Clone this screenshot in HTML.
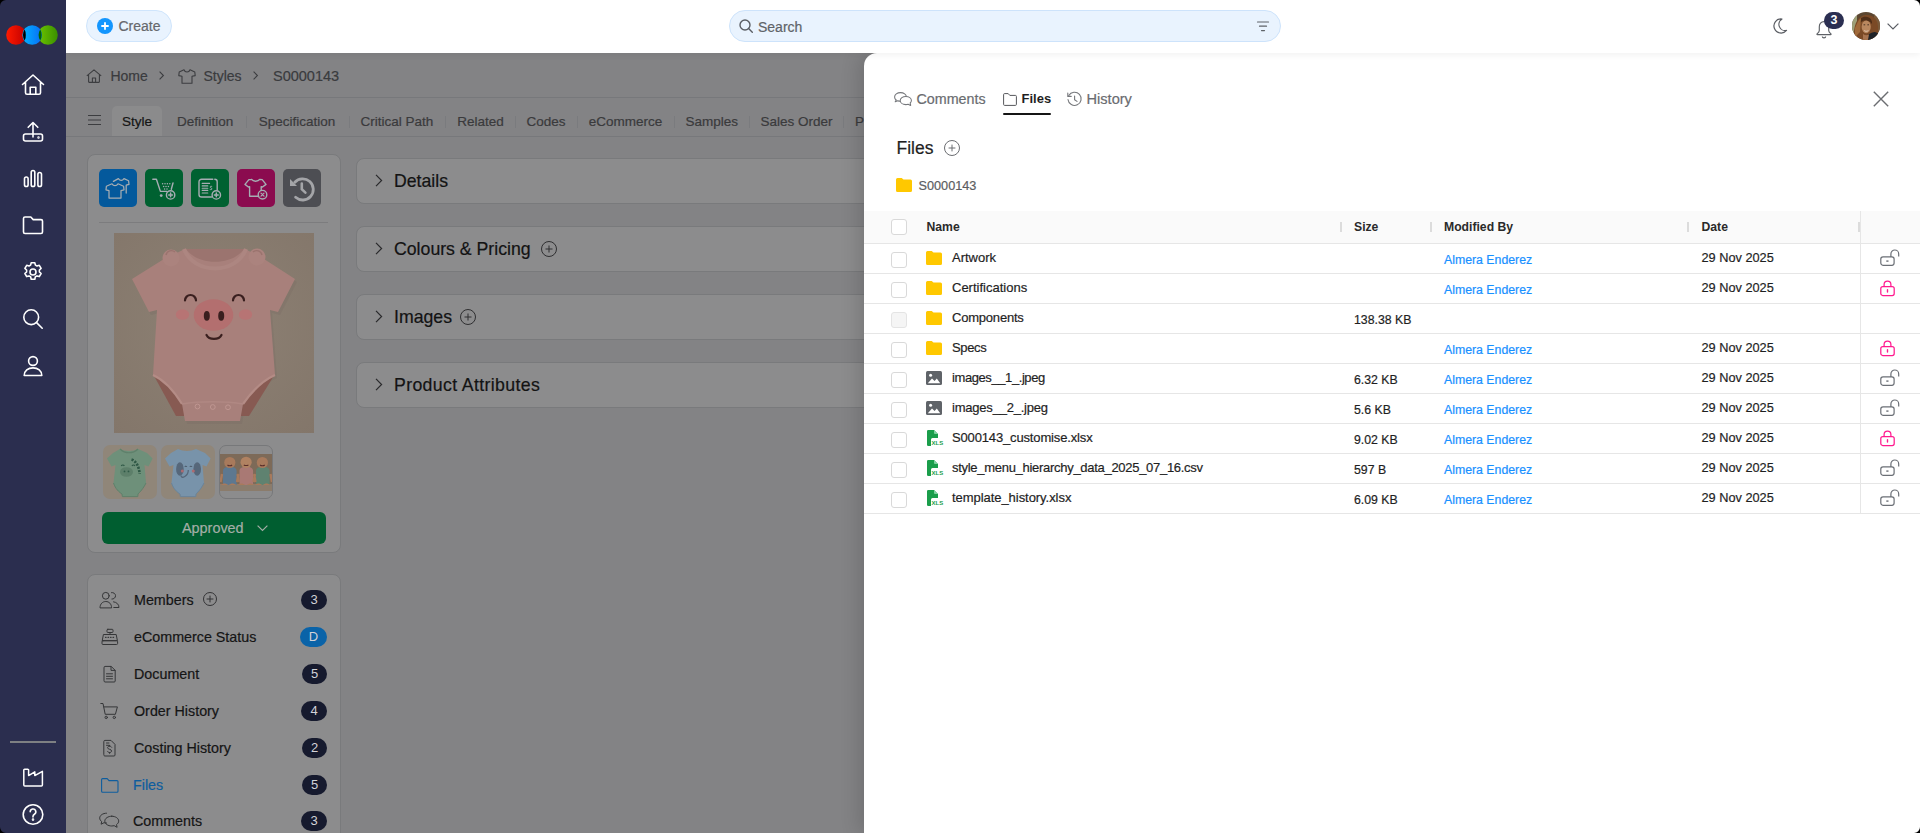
<!DOCTYPE html>
<html><head><meta charset="utf-8">
<style>
*{box-sizing:border-box;margin:0;padding:0}
html,body{width:1920px;height:833px;overflow:hidden;background:#838385;font-family:"Liberation Sans",sans-serif}
.a{position:absolute}
.t{position:absolute;white-space:nowrap;line-height:1;-webkit-text-stroke:.2px currentColor}
svg{position:absolute;overflow:visible}
#side{left:0;top:0;width:66px;height:833px;background:#2b2e4f}
#hdr{left:66px;top:0;width:1854px;height:53px;background:#fff;box-shadow:0 2px 7px rgba(0,0,0,.06)}
.card{position:absolute;background:#8c8c8d;border-radius:8px;border:1px solid #797a7c}
.tab{position:absolute;-webkit-text-stroke:.2px currentColor;top:113.5px;font-size:13.5px;color:#3a3a3c}
.tsep{position:absolute;top:116px;width:1px;height:12px;background:#7a7b7e}
.acc{position:absolute;left:356px;width:1544px;height:46px;background:#8c8c8d;border-radius:8px;border:1px solid #797a7c}
.acc .t{left:37px;top:14px;font-size:17.7px;color:#131313}
.li{position:absolute;left:87px;width:254px;height:37px}
.li .t{left:47px;top:11.8px;font-size:14.3px;color:#151515}
.bdg{position:absolute;left:214px;top:9px;width:26px;height:20px;border-radius:10px;background:#161a2e;color:#d2d2d8;font-size:13px;text-align:center;line-height:20px}
#drawer{left:864px;top:53px;width:1056px;height:780px;background:#fff;border-top-left-radius:13px;box-shadow:-4px 0 20px rgba(0,0,0,.16)}
.cb{position:absolute;left:891px;width:16px;height:16px;border:1px solid #d9d9d9;border-radius:3px;background:#fff}
.cb.dis{background:#f5f5f5;border-color:#e4e4e4}
.th{position:absolute;top:221px;font-size:12.2px;font-weight:bold;color:#2a2a2a;white-space:nowrap;line-height:1}
.td{position:absolute;font-size:13px;color:#1f1f1f;white-space:nowrap;line-height:1;-webkit-text-stroke:.2px currentColor}
.td.sz{font-size:12.3px}
.td.au{font-size:12.3px;color:#1890ff}
.td.dt{font-size:12.75px}
</style></head>
<body>
<!-- content area (under mask) -->
<div class="a" id="content" style="left:66px;top:53px;width:1854px;height:780px;background:#838385"></div>
<!-- breadcrumb -->
<svg style="left:86px;top:69px" width="16" height="14" viewBox="0 0 16 14" fill="none" stroke="#3c3d40" stroke-width="1.1" stroke-linejoin="round"><path d="M0.8 6.8L8 0.8L15.2 6.8M2.6 5.4v7.4a.6.6 0 0 0 .6.6h9.6a.6.6 0 0 0 .6-.6V5.4M6.4 13.4V9h3.2v4.4"/></svg>
<div class="t" style="left:110.4px;top:68.5px;font-size:14px;color:#3a3b3e">Home</div>
<svg style="left:158.5px;top:71px" width="5" height="9" viewBox="0 0 5 9"><path d="M.6.6L4.4 4.5L.6 8.4" fill="none" stroke="#3c3d40" stroke-width="1.1"/></svg>
<svg style="left:178px;top:69px" width="18" height="15" viewBox="0 0 18 15" fill="none" stroke="#3c3d40" stroke-width="1.1" stroke-linejoin="round"><path d="M6 .8C6.5 2.2 7.6 3 9 3s2.5-.8 3-2.2L16.8 3 17.2 6.6 14 7.2V14.2H4V7.2L.8 6.6 1.2 3Z"/></svg>
<div class="t" style="left:203.5px;top:68.5px;font-size:14px;color:#3a3b3e">Styles</div>
<svg style="left:253px;top:71px" width="5" height="9" viewBox="0 0 5 9"><path d="M.6.6L4.4 4.5L.6 8.4" fill="none" stroke="#3c3d40" stroke-width="1.1"/></svg>
<div class="t" style="left:273px;top:68.5px;font-size:14.5px;color:#3a3b3e">S0000143</div>
<div class="a" style="left:66px;top:97px;width:1854px;height:1px;background:#77787b"></div>
<!-- tabs -->
<svg style="left:88px;top:115px" width="13" height="10" viewBox="0 0 13 10"><path d="M0 .5h13M0 5h13M0 9.5h13" stroke="#3c3d40" stroke-width="1"/></svg>
<div class="a" style="left:112px;top:106px;width:50px;height:31px;background:#8b8b8c;border-radius:5px 5px 0 0"></div>
<div class="tab" style="left:122px;color:#151515">Style</div>
<div class="tab" style="left:177px">Definition</div><div class="tsep" style="left:246px"></div>
<div class="tab" style="left:258.7px">Specification</div><div class="tsep" style="left:348.5px"></div>
<div class="tab" style="left:360.5px">Critical Path</div><div class="tsep" style="left:445px"></div>
<div class="tab" style="left:457.2px">Related</div><div class="tsep" style="left:514.5px"></div>
<div class="tab" style="left:526.5px">Codes</div><div class="tsep" style="left:577px"></div>
<div class="tab" style="left:588.7px">eCommerce</div><div class="tsep" style="left:673.5px"></div>
<div class="tab" style="left:685.5px">Samples</div><div class="tsep" style="left:748.5px"></div>
<div class="tab" style="left:760.5px">Sales Order</div><div class="tsep" style="left:843px"></div>
<div class="tab" style="left:855px">Pricing</div>
<div class="a" style="left:66px;top:136px;width:1854px;height:1px;background:#77787b"></div>
<!-- accordion cards -->
<div class="acc" style="top:158px"><svg style="left:18px;top:15px" width="8" height="13" viewBox="0 0 8 13"><path d="M1 .8L6.6 6.5L1 12.2" fill="none" stroke="#2a2a2c" stroke-width="1.2"/></svg><div class="t">Details</div></div>
<div class="acc" style="top:226px"><svg style="left:18px;top:15px" width="8" height="13" viewBox="0 0 8 13"><path d="M1 .8L6.6 6.5L1 12.2" fill="none" stroke="#2a2a2c" stroke-width="1.2"/></svg><div class="t">Colours &amp; Pricing</div><svg style="left:184px;top:14px" width="16" height="16" viewBox="0 0 16 16" fill="none" stroke="#2f2f31" stroke-width="1"><circle cx="8" cy="8" r="7.5"/><path d="M8 4.5v7M4.5 8h7"/></svg></div>
<div class="acc" style="top:294px"><svg style="left:18px;top:15px" width="8" height="13" viewBox="0 0 8 13"><path d="M1 .8L6.6 6.5L1 12.2" fill="none" stroke="#2a2a2c" stroke-width="1.2"/></svg><div class="t">Images</div><svg style="left:103px;top:14px" width="16" height="16" viewBox="0 0 16 16" fill="none" stroke="#2f2f31" stroke-width="1"><circle cx="8" cy="8" r="7.5"/><path d="M8 4.5v7M4.5 8h7"/></svg></div>
<div class="acc" style="top:362px"><svg style="left:18px;top:15px" width="8" height="13" viewBox="0 0 8 13"><path d="M1 .8L6.6 6.5L1 12.2" fill="none" stroke="#2a2a2c" stroke-width="1.2"/></svg><div class="t" style="letter-spacing:.36px">Product Attributes</div></div>
<!-- left card 1 -->
<div class="card" style="left:87px;top:154px;width:254px;height:399px"></div>
<div class="a" style="left:99px;top:169px;width:38px;height:38px;border-radius:5px;background:#04599c"></div>
<div class="a" style="left:145px;top:169px;width:38px;height:38px;border-radius:5px;background:#006131"></div>
<div class="a" style="left:191px;top:169px;width:38px;height:38px;border-radius:5px;background:#006131"></div>
<div class="a" style="left:237px;top:169px;width:38px;height:38px;border-radius:5px;background:#8b0b4f"></div>
<div class="a" style="left:283px;top:169px;width:38px;height:38px;border-radius:5px;background:#4d4e53"></div>
<svg style="left:99px;top:169px" width="38" height="38" viewBox="0 0 38 38" fill="none" stroke="#a6adb3" stroke-width="1.25" stroke-linejoin="round" stroke-linecap="round">
<path d="M14.4 12.4L19.4 9.6C20.2 10.8 21.2 11.4 22.2 11.4S24.2 10.8 25 9.6L29.6 11.8L30 15.4L27.2 16.2V24"/>
<path d="M13 14.8C13.8 16 15 16.6 16 16.6S18.2 16 19 14.8L24.6 17.2L25 20.8L22 21.6V29H10V21.6L7 20.8L7.4 17.2Z"/>
</svg>
<svg style="left:145px;top:169px" width="38" height="38" viewBox="0 0 38 38" fill="none" stroke="#a6adb3" stroke-width="1.4" stroke-linejoin="round" stroke-linecap="round">
<path d="M7.8 10.2H11.4L15.4 22.4H22"/><path d="M28 14L26.3 20.3"/>
<g fill="#a6adb3" stroke="none"><circle cx="17.6" cy="14.7" r=".75"/><circle cx="20" cy="14.7" r=".75"/><circle cx="22.4" cy="14.7" r=".75"/><circle cx="24.8" cy="14.7" r=".75"/><circle cx="18.6" cy="17.4" r=".75"/><circle cx="21" cy="17.4" r=".75"/><circle cx="23.4" cy="17.4" r=".75"/><circle cx="19.6" cy="20" r=".75"/><circle cx="22" cy="20" r=".75"/><circle cx="16.2" cy="26.6" r="1.4"/></g>
<circle cx="25.6" cy="25.9" r="4.2"/><path d="M25.6 24v3.8M23.7 25.9h3.8" stroke-width="1.5"/>
</svg>
<svg style="left:191px;top:169px" width="38" height="38" viewBox="0 0 38 38" fill="none" stroke="#a6adb3" stroke-width="1.4" stroke-linejoin="round" stroke-linecap="round">
<path d="M21.8 10.3H10.6A2.6 2.6 0 0 0 8 12.9V25.4A2.6 2.6 0 0 0 10.6 28H20.5"/><path d="M23.8 10.3A2.4 2.4 0 0 1 26.2 12.7V21"/>
<path d="M11.2 14.4h7.4M11.2 16.9h5.6M11.2 19.2h5.6M11.2 21.4h5.6M11.2 24h5.6" stroke-width="1.1"/>
<path d="M20.8 17.4c-.9-.5-1.8 0-1.6.8s1.8.8 1.7 1.7-1 1-1.8.6" stroke-width="1"/>
<circle cx="25.3" cy="25.9" r="4.2"/><path d="M25.3 24v3.8M23.4 25.9h3.8" stroke-width="1.5"/>
</svg>
<svg style="left:237px;top:169px" width="38" height="38" viewBox="0 0 38 38" fill="none" stroke="#a6adb3" stroke-width="1.4" stroke-linejoin="round" stroke-linecap="round">
<path d="M14.6 10.4C15.4 11.6 16.6 12.2 18.6 12.2S21.9 11.6 22.7 10.4L25.2 10.6L29 15.4L25.5 18L24.2 17.6V21.4M21.7 27.2H12.6V17.6L11.4 18L8 15.4L11.9 10.6L14.6 10.4"/>
<circle cx="25.5" cy="25.7" r="4.3"/><path d="M24 24.2l3 3M27 24.2l-3 3" stroke-width="1.2"/>
</svg>
<svg style="left:283px;top:169px" width="38" height="38" viewBox="0 0 38 38" fill="none" stroke="#a4a5a8" stroke-width="2.8" stroke-linecap="round">
<path d="M11.8 13.3A10.6 10.6 0 1 1 12.6 28.3"/>
<path d="M7 10.1V16.9H14Z" fill="#a4a5a8" stroke="none"/>
<path d="M18.8 14.6V20.3L22.4 23.6" stroke-width="2.6"/>
</svg>
<div class="a" style="left:99px;top:222px;width:229px;height:1px;background:#7c7c7e"></div>
<svg style="left:114px;top:233px" width="200" height="200" viewBox="0 0 200 200">
<defs><radialGradient id="obg" cx="0.5" cy="0.45" r="0.75"><stop offset="0" stop-color="#8d8174"/><stop offset="1" stop-color="#83766a"/></radialGradient></defs>
<rect width="200" height="200" fill="url(#obg)"/>
<path d="M71 16C85 20 117 20 131 16L150 26L181 46L164 79L156 77L161 142C150 147 138 158 129 171L126 188H71L68 171C60 158 50 147 39 142L43 77L35 79L18 46L50 26Z" fill="#7a6c64" opacity=".35" transform="translate(2 3)"/>
<path d="M39 141L62 183H135L161 141Z" fill="#875a52"/>
<path d="M71 16C85 20 117 20 131 16L150 26L181 46L164 79L156 77L161 142C150 147 138 158 129 171L126 188H71L68 171C60 158 50 147 39 142L43 77L35 79L18 46L50 26Z" fill="#a8807b"/>
<path d="M39 142C50 147 60 158 68 171M161 142C150 147 138 158 129 171" fill="none" stroke="#b48c86" stroke-width="2.2"/>
<path d="M72 16C84 33 118 33 130 16Z" fill="#9b746f"/>
<path d="M70 16C80 42 122 42 132 16" fill="none" stroke="#ad8681" stroke-width="4"/>
<circle cx="57" cy="25" r="8.5" fill="#ab837e"/><circle cx="143" cy="24" r="8.5" fill="#ab837e"/>
<path d="M52 22a5.5 5.5 0 0 1 9-3" fill="none" stroke="#9a736e" stroke-width="1.4"/><path d="M139 19a5.5 5.5 0 0 1 9 3" fill="none" stroke="#9a736e" stroke-width="1.4"/>
<path d="M68 171C85 168 112 168 129 171" fill="none" stroke="#b08883" stroke-width="1.5"/>
<circle cx="83.5" cy="173.5" r="2.4" fill="none" stroke="#bf9691" stroke-width="1"/><circle cx="98.8" cy="174" r="2.4" fill="none" stroke="#bf9691" stroke-width="1"/><circle cx="114" cy="174.3" r="2.4" fill="none" stroke="#bf9691" stroke-width="1"/>
<ellipse cx="99.5" cy="82" rx="19.8" ry="15.8" fill="#b36f6f"/>
<ellipse cx="68.5" cy="81.5" rx="6.7" ry="5.3" fill="#b77474"/><ellipse cx="131.5" cy="81.5" rx="6.7" ry="5.3" fill="#b77474"/>
<ellipse cx="92.8" cy="82.9" rx="3" ry="4.8" fill="#3a1f1f"/><ellipse cx="107.2" cy="82.9" rx="3" ry="4.8" fill="#3a1f1f"/>
<path d="M71 67.5a5.5 5.5 0 0 1 11 0M119 67.5a5.5 5.5 0 0 1 11 0M92.5 102a8 6 0 0 0 15 0" fill="none" stroke="#3a1f1f" stroke-width="2.2" stroke-linecap="round"/>
</svg>
<div class="a" style="left:102.5px;top:445px;width:54px;height:54px;border-radius:7px;background:#908679;overflow:hidden"><svg style="left:0;top:0" width="54" height="54" viewBox="0 0 54 54"><path d="M17 4C22 6.5 30 6.5 35 4L44 8L49.6 13.5L45.5 21.5L41.5 20L43 38C40 44 37 47 35 49L34.8 51.6H19.4L19 49C16 47 12.5 44 10.5 38L12.5 20L8.5 21.5L4 13.5L10 8Z" fill="#6e907a"/><path d="M10.5 38C12.5 44 16 47 19 49L19.4 51.6H34.8L35 49C37 47 40 44 43 38" fill="none" stroke="#5f806b" stroke-width="1"/><path d="M17 4C22 9 30 9 35 4" fill="none" stroke="#5f806b" stroke-width="1.2"/>
<path d="M28.5 14.5C33 16 36 21 36.6 29" fill="none" stroke="#2f5846" stroke-width="2.6" stroke-dasharray="2.2 1.2"/>
<ellipse cx="23.5" cy="27" rx="6.5" ry="4.8" fill="#5d7f6a"/><circle cx="21.5" cy="26.4" r=".9" fill="#2f5846"/><circle cx="25.5" cy="26.4" r=".9" fill="#2f5846"/>
<path d="M18.3 21a1.6 1.6 0 0 1 3 0M29 21a1.6 1.6 0 0 1 3 0" fill="none" stroke="#2f5846" stroke-width="1.1"/></svg></div>
<div class="a" style="left:160.5px;top:445px;width:54px;height:54px;border-radius:7px;background:#908679;overflow:hidden"><svg style="left:0;top:0" width="54" height="54" viewBox="0 0 54 54"><path d="M17 4C22 6.5 30 6.5 35 4L44 8L49.6 13.5L45.5 21.5L41.5 20L43 38C40 44 37 47 35 49L34.8 51.6H19.4L19 49C16 47 12.5 44 10.5 38L12.5 20L8.5 21.5L4 13.5L10 8Z" fill="#7893aa"/><path d="M10.5 38C12.5 44 16 47 19 49L19.4 51.6H34.8L35 49C37 47 40 44 43 38" fill="none" stroke="#6a849a" stroke-width="1"/>
<ellipse cx="18.9" cy="24" rx="3.8" ry="6.8" fill="#56677a"/><ellipse cx="36.2" cy="24" rx="3.8" ry="6.8" fill="#56677a"/>
<circle cx="21.3" cy="26" r="1.5" fill="#ad6a70"/><circle cx="32.3" cy="26" r="1.5" fill="#ad6a70"/>
<path d="M23.5 22a1.5 1.5 0 0 1 2.6 0M28.6 22a1.5 1.5 0 0 1 2.6 0" fill="none" stroke="#3f4c5a" stroke-width=".9"/>
<path d="M27.3 25c0 3-1 5-3.5 6.5s-4 .5-3.5-1" fill="none" stroke="#56677a" stroke-width="1.3"/></svg></div>
<div class="a" style="left:218.5px;top:445px;width:54px;height:54px;border-radius:7px;background:#8c8c8d;border:1px solid #77787a;overflow:hidden"><svg style="left:0;top:8px" width="52" height="37" viewBox="0 0 52 37"><rect width="52" height="37" fill="#7d6a58"/><rect y="30" width="52" height="7" fill="#8b7c6c"/>
<path d="M3 17c0-3 3-4.5 6.8-4.5s6.8 1.5 6.8 4.5V31H3Z" fill="#5d7890"/><path d="M19.5 17c0-3 3-4.5 6.8-4.5s6.8 1.5 6.8 4.5V31h-13.6Z" fill="#a97974"/><path d="M36 17c0-3 3-4.5 6.8-4.5S49.6 14 49.6 17V31H36Z" fill="#5f8270"/>
<circle cx="9.8" cy="8.5" r="5.6" fill="#a87a5c"/><circle cx="26.1" cy="8.3" r="5.6" fill="#b08262"/><circle cx="42.4" cy="8.5" r="5.6" fill="#a87a5c"/>
<path d="M7.5 11c1 1 3.6 1 4.6 0M23.8 10.8c1 1 3.6 1 4.6 0M40.1 11c1 1 3.6 1 4.6 0" fill="none" stroke="#5a2e2a" stroke-width="1.1"/>
<path d="M1 31c2-2 5-2 7 0M9 31c2-2 5-2 7 0M18 31c2-2 5-2 7 0M27 31c2-2 5-2 7 0M35 31c2-2 5-2 7 0M43 31c2-2 5-2 7 0" fill="#a87a5c"/>
<path d="M2 20l-1.5 8M17.5 20l1.5 8M18.5 20l-1.5 8M34 20l1.5 8M35 20l-1.5 8M50.5 20l1.5 8" stroke="#a87a5c" stroke-width="2.4"/></svg></div>
<div class="a" style="left:102px;top:512px;width:224px;height:32px;border-radius:6px;background:#005e30"></div>
<div class="t" style="left:182px;top:521px;font-size:14.4px;color:#a4aea7">Approved</div>
<svg style="left:257px;top:525px" width="11" height="6" viewBox="0 0 11 6"><path d="M.6.6L5.5 5.4L10.4.6" fill="none" stroke="#a4aea7" stroke-width="1.2"/></svg>
<!-- left card 2 -->
<div class="card" style="left:87px;top:574px;width:254px;height:270px"></div>
<div class="li" style="top:581px"><div class="t">Members</div><svg style="left:116px;top:11px" width="14" height="14" viewBox="0 0 14 14" fill="none" stroke="#333335" stroke-width="1"><circle cx="7" cy="7" r="6.5"/><path d="M7 3.6v6.8M3.6 7h6.8"/></svg><div class="bdg">3</div></div>
<div class="li" style="top:618px"><div class="t">eCommerce Status</div><div class="bdg" style="left:213px;width:27px;background:#0a63a8">D</div></div>
<div class="li" style="top:655px"><div class="t">Document</div><div class="bdg" style="left:215px;width:25px">5</div></div>
<div class="li" style="top:692px"><div class="t">Order History</div><div class="bdg">4</div></div>
<div class="li" style="top:729px"><div class="t">Costing History</div><div class="bdg" style="left:215px;width:25px">2</div></div>
<div class="li" style="top:766px"><div class="t" style="left:46px;color:#0e5d9e">Files</div><div class="bdg" style="left:215px;width:25px">5</div></div>
<div class="li" style="top:802px"><div class="t" style="left:46px">Comments</div><div class="bdg">3</div></div>
<svg style="left:0;top:0" width="400" height="833" viewBox="0 0 400 833" fill="none" stroke="#353638" stroke-width="1" stroke-linejoin="round" stroke-linecap="round">
<!-- members -->
<circle cx="105.8" cy="595.8" r="3.4"/><path d="M100 607.5c0-3.6 2.6-6 5.8-6s5.8 2.4 5.8 6Z"/>
<path d="M111.5 592.6a3.3 3.3 0 1 1 .4 6.5"/><path d="M113.5 601.8c3.2.4 5.5 2.6 5.5 5.7h-5.2"/>
<!-- register -->
<rect x="107" y="629.3" width="6" height="3.2" rx=".8"/><path d="M110 632.5v2"/>
<path d="M103.8 634.5h12.4l1.2 6.2H102.6Z"/><rect x="102" y="640.7" width="15.6" height="3.8" rx="1"/>
<path d="M105.5 637.3h.6M108 637.3h.6M110.5 637.3h.6M113 637.3h.6" stroke-width="1.2"/>
<!-- document -->
<path d="M104 667.4a1 1 0 0 1 1-1h6.2l4 4v10.6a1 1 0 0 1-1 1h-9.2a1 1 0 0 1-1-1Z"/><path d="M111 666.6v3.8h4"/><path d="M106.5 673.8h6M106.5 676.3h6M106.5 678.8h6"/>
<!-- cart -->
<path d="M100.8 703.5h2.2l2.2 10.8h10.2l2-7.4H104"/><circle cx="106.2" cy="717.4" r="1.2"/><circle cx="114.3" cy="717.4" r="1.2"/>
<!-- costing -->
<path d="M103.8 741.4a1 1 0 0 1 1-1h6.2l4 4v10.6a1 1 0 0 1-1 1h-9.2a1 1 0 0 1-1-1Z"/><path d="M106.5 743h2.5M106.5 745.3h2.5"/><path d="M111.6 747.2c-.5-.7-1.2-1-2-1-1.2 0-2 .6-2 1.5 0 2 4 1.2 4 3.3 0 .9-.8 1.5-2 1.5-.9 0-1.6-.4-2.1-1.1M109.6 745.3v.9M109.6 752.5v.9"/>
<!-- files folder -->
<path d="M101.6 779.6a1 1 0 0 1 1-1h4.6l1.8 2h8a1 1 0 0 1 1 1v9.6a1 1 0 0 1-1 1h-14.4a1 1 0 0 1-1-1Z" stroke="#0e5d9e" stroke-width="1.1"/>
<!-- comments -->
<path d="M106.5 813.2c-3.8 0-6.8 2.2-6.8 4.9 0 1.4.8 2.6 2 3.5l-.6 2.6 2.9-1.5c.8.2 1.6.3 2.5.3"/>
<path d="M111.8 816.2c-3.9 0-7 2.2-7 4.9s3.1 4.9 7 4.9c.8 0 1.6-.1 2.4-.3l2.9 1.6-.6-2.7c1.3-.9 2.2-2.1 2.2-3.5 0-2.7-3.1-4.9-6.9-4.9Z"/>
</svg>


<!-- drawer -->
<div class="a" id="drawer"></div>
<!-- drawer tabs -->
<svg style="left:893.5px;top:92px" width="19" height="14" viewBox="0 0 19 14" fill="#fff" stroke="#75777b" stroke-width="1.05" stroke-linejoin="round"><path d="M6.5 .6C3.2 .6.6 2.5.6 4.9c0 1.2.6 2.3 1.6 3.1L1.2 9.8 3.7 8.7C4.6 9.1 5.5 9.2 6.5 9.2c3.3 0 5.9-1.9 5.9-4.3S9.8.6 6.5.6Z"/><path d="M11.8 4.4c-3.1 0-5.6 1.8-5.6 4.1s2.5 4.1 5.6 4.1c.8 0 1.6-.1 2.3-.4l2.6 1.2-.5-2.4c.8-.7 1.2-1.6 1.2-2.5 0-2.3-2.5-4.1-5.6-4.1Z"/></svg>
<div class="t" style="left:916.5px;top:92px;font-size:14.3px;color:#6a6c70">Comments</div>
<svg style="left:1003px;top:92.5px" width="14" height="13" viewBox="0 0 14 13" fill="none" stroke="#55575b" stroke-width="1" stroke-linejoin="round"><path d="M.6 1.6a1 1 0 0 1 1-1h3.6l1.6 1.8h5.6a1 1 0 0 1 1 1v8a1 1 0 0 1-1 1H1.6a1 1 0 0 1-1-1Z"/></svg>
<div class="t" style="left:1021.5px;top:92px;font-size:13px;font-weight:bold;color:#1f1f1f;-webkit-text-stroke:0">Files</div>
<div class="a" style="left:1003px;top:113px;width:48px;height:2px;background:#151515;border-radius:1px"></div>
<svg style="left:1067px;top:91.5px" width="15" height="15" viewBox="0 0 15 15" fill="none" stroke="#75777b" stroke-width="1.1" stroke-linecap="round" stroke-linejoin="round"><path d="M1.8 3.6A6.6 6.6 0 1 1 1 7.5"/><path d="M.8 1v3.4h3.4"/><path d="M7.6 4v3.8l2.4 1.6"/></svg>
<div class="t" style="left:1086.5px;top:92px;font-size:14.6px;color:#6a6c70">History</div>
<svg style="left:1873px;top:91px" width="16" height="16" viewBox="0 0 16 16"><path d="M.8.8L15.2 15.2M15.2.8L.8 15.2" stroke="#6b6d71" stroke-width="1.4"/></svg>
<!-- files heading -->
<div class="t" style="left:896.5px;top:140px;font-size:17.5px;color:#1f1f1f">Files</div>
<svg style="left:943.5px;top:140px" width="16" height="16" viewBox="0 0 16 16" fill="none" stroke="#6b6d71" stroke-width="1"><circle cx="8" cy="8" r="7.5"/><path d="M8 4.6v6.8M4.6 8h6.8"/></svg>
<svg style="left:896px;top:178px" width="16" height="14" viewBox="0 0 16 14"><path d="M0 1.5A1.5 1.5 0 0 1 1.5 0h4.2l1.8 1.6h7A1.5 1.5 0 0 1 16 3.1v9.4A1.5 1.5 0 0 1 14.5 14h-13A1.5 1.5 0 0 1 0 12.5Z" fill="#ffc800"/></svg>
<div class="t" style="left:918.5px;top:180px;font-size:12.7px;color:#5b5d61">S0000143</div>
<!-- table -->
<div class="a" style="left:864px;top:211px;width:1056px;height:32px;background:#fafafa"></div>
<div class="a" style="left:864px;top:243px;width:1056px;height:1px;background:#e6e6e6"></div>
<div class="a" style="left:1860px;top:211px;width:1px;height:302px;background:#e6e6e6"></div>
<div class="a" style="left:1340px;top:222px;width:2px;height:10px;background:#dcdcdc"></div>
<div class="a" style="left:1430px;top:222px;width:2px;height:10px;background:#dcdcdc"></div>
<div class="a" style="left:1687px;top:222px;width:2px;height:10px;background:#dcdcdc"></div>
<div class="a" style="left:1858px;top:222px;width:2px;height:10px;background:#dcdcdc"></div>
<div class="cb" style="top:219px"></div>
<div class="th" style="left:926.5px">Name</div>
<div class="th" style="left:1354px">Size</div>
<div class="th" style="left:1444px">Modified By</div>
<div class="th" style="left:1701.5px">Date</div>

<div class="cb" style="top:252px"></div>
<svg style="left:926px;top:251px" width="16" height="14" viewBox="0 0 16 14"><g><path d="M0 1.5A1.5 1.5 0 0 1 1.5 0h4.2l1.8 1.6h7A1.5 1.5 0 0 1 16 3.1v9.4A1.5 1.5 0 0 1 14.5 14h-13A1.5 1.5 0 0 1 0 12.5Z" fill="#ffc800"/></g></svg>
<div class="td" style="left:952px;top:251px">Artwork</div>
<div class="td au" style="left:1444px;top:254px">Almera Enderez</div>
<div class="td dt" style="left:1701.5px;top:252px">29 Nov 2025</div>
<svg style="left:1880px;top:249px" width="19" height="17" viewBox="0 0 19 17"><g fill="none" stroke="#6b6f76" stroke-width="1.2"><rect x="0.8" y="7.9" width="13.3" height="8.4" rx="2.2"/><path d="M10.9 7.9V4.9a3.9 3.9 0 0 1 7.8 0v2.6"/><path d="M6.3 12.1h2.2" stroke-width="1.4"/></g></svg>
<div class="a" style="left:864px;top:273px;width:1056px;height:1px;background:#e6e6e6"></div>
<div class="cb" style="top:282px"></div>
<svg style="left:926px;top:281px" width="16" height="14" viewBox="0 0 16 14"><g><path d="M0 1.5A1.5 1.5 0 0 1 1.5 0h4.2l1.8 1.6h7A1.5 1.5 0 0 1 16 3.1v9.4A1.5 1.5 0 0 1 14.5 14h-13A1.5 1.5 0 0 1 0 12.5Z" fill="#ffc800"/></g></svg>
<div class="td" style="left:952px;top:281px">Certifications</div>
<div class="td au" style="left:1444px;top:284px">Almera Enderez</div>
<div class="td dt" style="left:1701.5px;top:282px">29 Nov 2025</div>
<svg style="left:1880px;top:280px" width="15" height="16" viewBox="0 0 15 16"><g fill="none" stroke="#ff1a8f" stroke-width="1.25"><rect x="0.8" y="6.5" width="13.4" height="9" rx="2"/><path d="M4.1 6.5V4.6a3.4 3.4 0 0 1 6.8 0v1.9"/><path d="M7.5 9.8v2.2" stroke-width="1.4" stroke-linecap="round"/></g></svg>
<div class="a" style="left:864px;top:303px;width:1056px;height:1px;background:#e6e6e6"></div>
<div class="cb dis" style="top:312px"></div>
<svg style="left:926px;top:311px" width="16" height="14" viewBox="0 0 16 14"><g><path d="M0 1.5A1.5 1.5 0 0 1 1.5 0h4.2l1.8 1.6h7A1.5 1.5 0 0 1 16 3.1v9.4A1.5 1.5 0 0 1 14.5 14h-13A1.5 1.5 0 0 1 0 12.5Z" fill="#ffc800"/></g></svg>
<div class="td" style="left:952px;top:311px;letter-spacing:-0.210px">Components</div>
<div class="td sz" style="left:1354px;top:314px">138.38 KB</div>
<div class="a" style="left:864px;top:333px;width:1056px;height:1px;background:#e6e6e6"></div>
<div class="cb" style="top:342px"></div>
<svg style="left:926px;top:341px" width="16" height="14" viewBox="0 0 16 14"><g><path d="M0 1.5A1.5 1.5 0 0 1 1.5 0h4.2l1.8 1.6h7A1.5 1.5 0 0 1 16 3.1v9.4A1.5 1.5 0 0 1 14.5 14h-13A1.5 1.5 0 0 1 0 12.5Z" fill="#ffc800"/></g></svg>
<div class="td" style="left:952px;top:341px;letter-spacing:-0.360px">Specs</div>
<div class="td au" style="left:1444px;top:344px">Almera Enderez</div>
<div class="td dt" style="left:1701.5px;top:342px">29 Nov 2025</div>
<svg style="left:1880px;top:340px" width="15" height="16" viewBox="0 0 15 16"><g fill="none" stroke="#ff1a8f" stroke-width="1.25"><rect x="0.8" y="6.5" width="13.4" height="9" rx="2"/><path d="M4.1 6.5V4.6a3.4 3.4 0 0 1 6.8 0v1.9"/><path d="M7.5 9.8v2.2" stroke-width="1.4" stroke-linecap="round"/></g></svg>
<div class="a" style="left:864px;top:363px;width:1056px;height:1px;background:#e6e6e6"></div>
<div class="cb" style="top:372px"></div>
<svg style="left:926px;top:371px" width="16" height="14" viewBox="0 0 16 14"><g><rect x="0" y="0" width="16" height="14" rx="1.5" fill="#5f6368"/><circle cx="4.6" cy="4.2" r="1.5" fill="#fff"/><path d="M1.8 12.2L6 7.4l2.6 2.6 2.2-2.4 3.4 4.6Z" fill="#fff"/></g></svg>
<div class="td" style="left:952px;top:371px;letter-spacing:-0.413px">images__1_.jpeg</div>
<div class="td sz" style="left:1354px;top:374px">6.32 KB</div>
<div class="td au" style="left:1444px;top:374px">Almera Enderez</div>
<div class="td dt" style="left:1701.5px;top:372px">29 Nov 2025</div>
<svg style="left:1880px;top:369px" width="19" height="17" viewBox="0 0 19 17"><g fill="none" stroke="#6b6f76" stroke-width="1.2"><rect x="0.8" y="7.9" width="13.3" height="8.4" rx="2.2"/><path d="M10.9 7.9V4.9a3.9 3.9 0 0 1 7.8 0v2.6"/><path d="M6.3 12.1h2.2" stroke-width="1.4"/></g></svg>
<div class="a" style="left:864px;top:393px;width:1056px;height:1px;background:#e6e6e6"></div>
<div class="cb" style="top:402px"></div>
<svg style="left:926px;top:401px" width="16" height="14" viewBox="0 0 16 14"><g><rect x="0" y="0" width="16" height="14" rx="1.5" fill="#5f6368"/><circle cx="4.6" cy="4.2" r="1.5" fill="#fff"/><path d="M1.8 12.2L6 7.4l2.6 2.6 2.2-2.4 3.4 4.6Z" fill="#fff"/></g></svg>
<div class="td" style="left:952px;top:401px;letter-spacing:-0.213px">images__2_.jpeg</div>
<div class="td sz" style="left:1354px;top:404px">5.6 KB</div>
<div class="td au" style="left:1444px;top:404px">Almera Enderez</div>
<div class="td dt" style="left:1701.5px;top:402px">29 Nov 2025</div>
<svg style="left:1880px;top:399px" width="19" height="17" viewBox="0 0 19 17"><g fill="none" stroke="#6b6f76" stroke-width="1.2"><rect x="0.8" y="7.9" width="13.3" height="8.4" rx="2.2"/><path d="M10.9 7.9V4.9a3.9 3.9 0 0 1 7.8 0v2.6"/><path d="M6.3 12.1h2.2" stroke-width="1.4"/></g></svg>
<div class="a" style="left:864px;top:423px;width:1056px;height:1px;background:#e6e6e6"></div>
<div class="cb" style="top:432px"></div>
<svg style="left:926px;top:430px" width="16" height="16" viewBox="0 0 16 16"><g><path d="M1 1.2A1.2 1.2 0 0 1 2.2 0H8l4 4v4H6.5a1.5 1.5 0 0 0-1.5 1.5V16H2.2A1.2 1.2 0 0 1 1 14.8Z" fill="#1a9e4b"/><path d="M8 0v3a1 1 0 0 0 1 1h3Z" fill="#7fd1a0"/><text x="5.6" y="15.4" font-family="Liberation Sans" font-size="6" font-weight="bold" fill="#1a9e4b">XLS</text></g></svg>
<div class="td" style="left:952px;top:431px;letter-spacing:-0.150px">S000143_customise.xlsx</div>
<div class="td sz" style="left:1354px;top:434px">9.02 KB</div>
<div class="td au" style="left:1444px;top:434px">Almera Enderez</div>
<div class="td dt" style="left:1701.5px;top:432px">29 Nov 2025</div>
<svg style="left:1880px;top:430px" width="15" height="16" viewBox="0 0 15 16"><g fill="none" stroke="#ff1a8f" stroke-width="1.25"><rect x="0.8" y="6.5" width="13.4" height="9" rx="2"/><path d="M4.1 6.5V4.6a3.4 3.4 0 0 1 6.8 0v1.9"/><path d="M7.5 9.8v2.2" stroke-width="1.4" stroke-linecap="round"/></g></svg>
<div class="a" style="left:864px;top:453px;width:1056px;height:1px;background:#e6e6e6"></div>
<div class="cb" style="top:462px"></div>
<svg style="left:926px;top:460px" width="16" height="16" viewBox="0 0 16 16"><g><path d="M1 1.2A1.2 1.2 0 0 1 2.2 0H8l4 4v4H6.5a1.5 1.5 0 0 0-1.5 1.5V16H2.2A1.2 1.2 0 0 1 1 14.8Z" fill="#1a9e4b"/><path d="M8 0v3a1 1 0 0 0 1 1h3Z" fill="#7fd1a0"/><text x="5.6" y="15.4" font-family="Liberation Sans" font-size="6" font-weight="bold" fill="#1a9e4b">XLS</text></g></svg>
<div class="td" style="left:952px;top:461px;letter-spacing:-0.290px">style_menu_hierarchy_data_2025_07_16.csv</div>
<div class="td sz" style="left:1354px;top:464px">597 B</div>
<div class="td au" style="left:1444px;top:464px">Almera Enderez</div>
<div class="td dt" style="left:1701.5px;top:462px">29 Nov 2025</div>
<svg style="left:1880px;top:459px" width="19" height="17" viewBox="0 0 19 17"><g fill="none" stroke="#6b6f76" stroke-width="1.2"><rect x="0.8" y="7.9" width="13.3" height="8.4" rx="2.2"/><path d="M10.9 7.9V4.9a3.9 3.9 0 0 1 7.8 0v2.6"/><path d="M6.3 12.1h2.2" stroke-width="1.4"/></g></svg>
<div class="a" style="left:864px;top:483px;width:1056px;height:1px;background:#e6e6e6"></div>
<div class="cb" style="top:492px"></div>
<svg style="left:926px;top:490px" width="16" height="16" viewBox="0 0 16 16"><g><path d="M1 1.2A1.2 1.2 0 0 1 2.2 0H8l4 4v4H6.5a1.5 1.5 0 0 0-1.5 1.5V16H2.2A1.2 1.2 0 0 1 1 14.8Z" fill="#1a9e4b"/><path d="M8 0v3a1 1 0 0 0 1 1h3Z" fill="#7fd1a0"/><text x="5.6" y="15.4" font-family="Liberation Sans" font-size="6" font-weight="bold" fill="#1a9e4b">XLS</text></g></svg>
<div class="td" style="left:952px;top:491px;letter-spacing:-0.052px">template_history.xlsx</div>
<div class="td sz" style="left:1354px;top:494px">6.09 KB</div>
<div class="td au" style="left:1444px;top:494px">Almera Enderez</div>
<div class="td dt" style="left:1701.5px;top:492px">29 Nov 2025</div>
<svg style="left:1880px;top:489px" width="19" height="17" viewBox="0 0 19 17"><g fill="none" stroke="#6b6f76" stroke-width="1.2"><rect x="0.8" y="7.9" width="13.3" height="8.4" rx="2.2"/><path d="M10.9 7.9V4.9a3.9 3.9 0 0 1 7.8 0v2.6"/><path d="M6.3 12.1h2.2" stroke-width="1.4"/></g></svg>
<div class="a" style="left:864px;top:513px;width:1056px;height:1px;background:#e6e6e6"></div>

<!-- header -->
<div class="a" id="hdr"></div>
<div class="a" style="left:86px;top:10px;width:86px;height:32px;border-radius:16px;background:#e9f3fe;border:1px solid #cfe5fc"></div>
<svg style="left:97px;top:18px" width="16" height="16" viewBox="0 0 16 16"><circle cx="8" cy="8" r="8" fill="#1396fe"/><path d="M8 4.3v7.4M4.3 8h7.4" stroke="#fff" stroke-width="1.8"/></svg>
<div class="t" style="left:118.5px;top:19px;font-size:14px;color:#66686c">Create</div>
<div class="a" style="left:729px;top:10px;width:552px;height:32px;border-radius:16px;background:#e9f3fe;border:1px solid #cde3fb"></div>
<svg style="left:739px;top:19px" width="14" height="14" viewBox="0 0 14 14"><circle cx="6" cy="6" r="5" fill="none" stroke="#5a5e64" stroke-width="1.4"/><path d="M9.6 9.6L13.3 13.3" stroke="#5a5e64" stroke-width="1.4" stroke-linecap="round"/></svg>
<div class="t" style="left:758px;top:19.5px;font-size:14px;color:#5f6368">Search</div>
<svg style="left:1257px;top:21px" width="12" height="11" viewBox="0 0 12 11"><path d="M0.5 1h11M2.5 5.2h7M4.5 9.6h3" stroke="#5f6368" stroke-width="1.2" stroke-linecap="round"/></svg>
<svg style="left:1773px;top:17px" width="14" height="17" viewBox="0 0 14 17"><path d="M9 2A7.05 7.05 0 1 0 13.5 13.4A6.2 6.2 0 0 1 9 2Z" fill="none" stroke="#5a5d63" stroke-width="1.2" stroke-linejoin="round"/></svg>
<svg style="left:1816px;top:20px" width="16" height="19" viewBox="0 0 16 19" fill="none" stroke="#5e6166" stroke-width="1.15" stroke-linejoin="round"><path d="M8 1.6C5 1.6 3.3 4 3.3 6.8v3.6c0 1.6-1.3 2.6-2.2 3.4-.4.4-.2.8.3.8h13.2c.5 0 .7-.4.3-.8-.9-.8-2.2-1.8-2.2-3.4V6.8C12.7 4 11 1.6 8 1.6Z"/><path d="M6.3 16.6a1.7 1.3 0 0 0 3.4 0"/></svg>
<div class="a" style="left:1824.3px;top:12px;width:19.5px;height:17px;border-radius:9px;background:#2b2f52;color:#fff;font-size:12.5px;font-weight:bold;text-align:center;line-height:17px">3</div>
<svg style="left:1852px;top:12px" width="28" height="28" viewBox="0 0 28 28"><defs><clipPath id="av"><circle cx="14" cy="14" r="14"/></clipPath></defs><g clip-path="url(#av)">
<rect width="28" height="28" fill="#5b4630"/><rect x="0" y="4" width="5" height="18" fill="#9da078"/><rect x="22" y="0" width="6" height="20" fill="#7a5a3a"/>
<path d="M2 28C1 18 3 5 13 3C22 2 26 8 26 16V28Z" fill="#7b4a26"/>
<path d="M7 12C7 7 10 4.5 14 4.8C18 5 20.5 8 20 12C18 9 15 8 12 8.5C10 9 8 10.5 7 12Z" fill="#4e2e18"/>
<path d="M3 16C5 12 6 8 9 6L8 20C6 22 4 24 3 26Z" fill="#a06a3a"/>
<ellipse cx="14.2" cy="14.8" rx="4.6" ry="6.4" fill="#b9875f"/>
<path d="M12.2 18.6c1.2.9 3 .9 4.2 0" fill="none" stroke="#e8d4c0" stroke-width=".9"/>
<path d="M11.6 12.8h1.6M15.4 12.8h1.6" stroke="#3f2a1e" stroke-width=".9"/>
<path d="M16 28V23c2-2 5-3 7-3l5 2v6Z" fill="#1f2328"/>
<path d="M11 22c2 1.5 4 1.5 6 .5l-1 5.5h-5Z" fill="#a8744f"/>
</g></svg>
<svg style="left:1887px;top:23px" width="12" height="7" viewBox="0 0 12 7"><path d="M0.6 0.6L6 6L11.4 0.6" fill="none" stroke="#5a5d63" stroke-width="1.2"/></svg>
<!-- sidebar -->
<div class="a" id="side"></div>
<svg style="left:0;top:0" width="66" height="70" viewBox="0 0 66 70">
<defs>
<linearGradient id="gr" x1="0" x2="1"><stop offset="0" stop-color="#ff1a00"/><stop offset="1" stop-color="#c00000"/></linearGradient>
<linearGradient id="gb" x1="0" x2="1"><stop offset="0" stop-color="#00b4ff"/><stop offset="1" stop-color="#0a6cf5"/></linearGradient>
<linearGradient id="gg" x1="0" x2="1"><stop offset="0" stop-color="#6cc400"/><stop offset="1" stop-color="#3a8f00"/></linearGradient>
</defs>
<circle cx="16" cy="35" r="9.8" fill="url(#gr)"/>
<circle cx="48" cy="35" r="9.8" fill="url(#gg)"/>
<circle cx="32.2" cy="35" r="9.8" fill="url(#gb)"/>
<path d="M24.6 29.5A9.8 9.8 0 0 1 25.8 35A9.8 9.8 0 0 1 24.6 40.5A9.8 9.8 0 0 1 23 35A9.8 9.8 0 0 1 24.6 29.5Z" fill="#000"/>
<path d="M40.2 29.5A9.8 9.8 0 0 1 41.6 35A9.8 9.8 0 0 1 40.2 40.5A9.8 9.8 0 0 1 38.6 35A9.8 9.8 0 0 1 40.2 29.5Z" fill="#006400"/>
</svg>
<svg style="left:0;top:0" width="66" height="833" viewBox="0 0 66 833" fill="none" stroke="#fff" stroke-width="1.6" stroke-linejoin="round" stroke-linecap="round">
<!-- home -->
<path d="M22.5 84.5L33 75L43.5 84.5M25.5 82v10.8a1.5 1.5 0 0 0 1.5 1.5h12a1.5 1.5 0 0 0 1.5-1.5V82M30.2 94.3v-7h5.6v7"/>
<!-- upload -->
<path d="M33 137V122.5M28.2 127.3L33 122.5L37.8 127.3"/>
<rect x="23.5" y="134" width="19" height="7" rx="2"/>
<circle cx="38.5" cy="137.5" r="0.4" fill="#fff"/>
<!-- bars -->
<rect x="24.5" y="177" width="3.6" height="9.5" rx="1.8"/>
<rect x="31.2" y="170.5" width="3.6" height="16" rx="1.8"/>
<rect x="37.9" y="172.5" width="3.6" height="14" rx="1.8"/>
<!-- folder -->
<path d="M23.5 218.5a1.5 1.5 0 0 1 1.5-1.5h5.8l2.4 2.6H41a1.5 1.5 0 0 1 1.5 1.5V232a1.5 1.5 0 0 1-1.5 1.5H25a1.5 1.5 0 0 1-1.5-1.5Z"/>
<!-- gear -->
<circle cx="33" cy="272" r="3"/>
<path d="M31.2 262.8h3.6l.6 2.3 1.6.9 2.3-.7 1.8 3.1-1.7 1.6v1.9l1.7 1.6-1.8 3.1-2.3-.7-1.6.9-.6 2.4h-3.6l-.6-2.4-1.6-.9-2.3.7-1.8-3.1 1.7-1.6v-1.9l-1.7-1.6 1.8-3.1 2.3.7 1.6-.9Z"/>
<!-- search -->
<circle cx="31.2" cy="317.2" r="7.4"/>
<path d="M36.6 322.6L42.2 328.2"/>
<!-- user -->
<circle cx="33" cy="361" r="4.4"/>
<path d="M24.2 375.5c0-4.6 3.9-7.6 8.8-7.6s8.8 3 8.8 7.6Z"/>
<!-- factory -->
<path d="M23.8 770a.8.8 0 0 1 .8-.8h3.2a.8.8 0 0 1 .8.8v5.6l6.2-3.8v3.8l7.6-4.2V785a1 1 0 0 1-1 1H24.8a1 1 0 0 1-1-1Z" stroke-width="1.5"/>
<!-- help -->
<circle cx="33" cy="814.5" r="9.8"/>
<path d="M30.2 811.8a2.8 2.8 0 1 1 4.2 2.4c-.9.5-1.4 1.1-1.4 2.1v.6"/>
<circle cx="33" cy="819.6" r="0.5" fill="#fff"/>
</svg>
<div class="a" style="left:10px;top:741px;width:46px;height:2px;background:#7e8083"></div>

<svg style="left:0;top:0" width="1920" height="833" viewBox="0 0 1920 833"><path d="M0 0H6A6 6 0 0 0 0 6Z" fill="#000"/><path d="M1920 0H1914A6 6 0 0 1 1920 6Z" fill="#000"/><path d="M0 833H6A6 6 0 0 1 0 827Z" fill="#000"/><path d="M1920 833H1914A6 6 0 0 0 1920 827Z" fill="#000"/></svg>
</body></html>
